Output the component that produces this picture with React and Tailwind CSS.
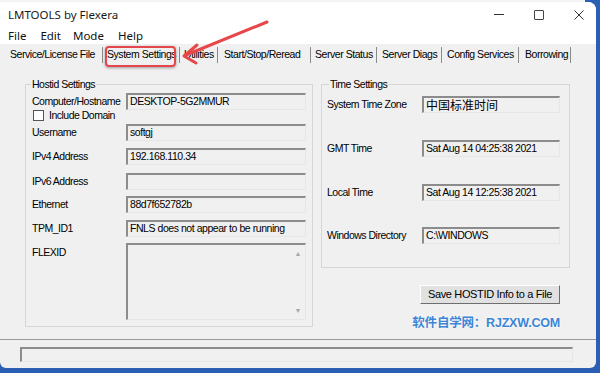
import React from 'react';

const ui = "font-['Liberation_Sans',Arial,sans-serif]";
const seg = "font-['Noto_Sans','Liberation_Sans',sans-serif]";

const tabs = [
  { label: 'Service/License File', w: 'w-[103px]', pl: 'pl-[10px]' },
  { label: 'System Settings', w: 'w-[77px]', pl: 'pl-[4px]' },
  { label: 'Utilities', w: 'w-[38px]', pl: 'pl-[4px]' },
  { label: 'Start/Stop/Reread', w: 'w-[93px]', pl: 'pl-[6px]' },
  { label: 'Server Status', w: 'w-[66px]', pl: 'pl-[4px]' },
  { label: 'Server Diags', w: 'w-[65px]', pl: 'pl-[5px]' },
  { label: 'Config Services', w: 'w-[77px]', pl: 'pl-[5px]' },
  { label: 'Borrowing', w: 'w-[52px]', pl: 'pl-[6px]' },
];

function Box({ value, className = '' }) {
  return (
    <div
      className={`h-[17px] flex items-center pl-[2px] bg-[#f0f0f0] border-t-2 border-l-2 border-t-[#8c8c8c] border-l-[#8c8c8c] border-b border-r border-b-[#e6e6e6] border-r-[#e6e6e6] text-[10.5px] tracking-[-0.45px] text-black whitespace-nowrap overflow-hidden ${className}`}
    >
      {value}
    </div>
  );
}

function Row({ label, value, labelW, boxW, className = '' }) {
  return (
    <div className={`flex items-center ${className}`}>
      <div className={`${labelW} text-[10.5px] tracking-[-0.5px] text-black whitespace-nowrap`}>{label}</div>
      <Box value={value} className={boxW} />
    </div>
  );
}

export default function App() {
  return (
    <div className={`w-[600px] h-[373px] overflow-hidden bg-[#2b5fb3] relative ${ui}`}>
      <div className="h-[2px] w-[585px] bg-[#f4f4f4]"></div>

      <div className="w-[596px] h-[366px] bg-[#f0f0f0] rounded-tr-[8px] rounded-br-[6px] rounded-bl-[6px] overflow-hidden flex flex-col">
        {/* title bar */}
        <div className={`h-[25px] bg-white flex items-center justify-between pl-[8px] pr-[12px] ${seg}`}>
          <span className="text-[11.5px] text-[#1a1a1a]">LMTOOLS by Flexera</span>
          <div className="flex items-center gap-[30px]">
            <div className="w-[10px] h-[1px] bg-[#333]"></div>
            <div className="w-[10px] h-[10px] border border-[#444] rounded-[1px]"></div>
            <svg width="10" height="10" viewBox="0 0 10 10">
              <path d="M0.5 0.5 L9.5 9.5 M9.5 0.5 L0.5 9.5" stroke="#333" strokeWidth="1" />
            </svg>
          </div>
        </div>

        {/* menu bar */}
        <div className={`h-[17px] bg-white flex items-center text-[11.5px] text-[#111] ${seg}`}>
          <span className="ml-[8px]">File</span>
          <span className="ml-[14px]">Edit</span>
          <span className="ml-[12px]">Mode</span>
          <span className="ml-[14px]">Help</span>
        </div>

        {/* tabs */}
        <div className="h-[20px] flex items-center pt-[2px]">
          {tabs.map((t) => (
            <div
              key={t.label}
              className={`${t.w} ${t.pl} h-[16px] flex items-center border-r border-[#8a8a8a] text-[10.5px] tracking-[-0.45px] text-black whitespace-nowrap`}
            >
              {t.label}
            </div>
          ))}
        </div>

        {/* tab page */}
        <div className="h-[275px] flex pt-[20px] pl-[25px] gap-[8px]">
          {/* Hostid Settings */}
          <div className="w-[288px] h-[243px] border border-[#d6d6d6] relative pl-[6px] pt-[8px]">
            <span className="absolute -top-[8px] left-[5px] px-[1px] bg-[#f0f0f0] text-[10.5px] tracking-[-0.5px] text-black leading-[14px]">
              Hostid Settings
            </span>
            <Row label="Computer/Hostname" value="DESKTOP-5G2MMUR" labelW="w-[94px]" boxW="w-[180px]" />
            <div className="flex items-center h-[11px]">
              <div className="ml-[1px] w-[11px] h-[11px] bg-white border border-[#555]"></div>
              <span className="ml-[5px] text-[10.5px] tracking-[-0.5px] text-black">Include Domain</span>
            </div>
            <Row label="Username" value="softgj" labelW="w-[94px]" boxW="w-[180px]" className="mt-[3px]" />
            <Row label="IPv4 Address" value="192.168.110.34" labelW="w-[94px]" boxW="w-[180px]" className="mt-[7px]" />
            <Row label="IPv6 Address" value="" labelW="w-[94px]" boxW="w-[180px]" className="mt-[8px]" />
            <Row label="Ethernet" value="88d7f652782b" labelW="w-[94px]" boxW="w-[180px]" className="mt-[6px]" />
            <Row label="TPM_ID1" value="FNLS does not appear to be running" labelW="w-[94px]" boxW="w-[180px]" className="mt-[7px]" />
            <div className="flex mt-[6px]">
              <div className="w-[94px] text-[10.5px] tracking-[-0.5px] text-black pt-[2px]">FLEXID</div>
              <div className="w-[180px] h-[77px] bg-[#f0f0f0] border-t-2 border-l-2 border-t-[#8c8c8c] border-l-[#8c8c8c] border-b border-r border-b-[#e6e6e6] border-r-[#e6e6e6] flex justify-end">
                <div className="w-[14px] h-full flex flex-col items-center justify-between py-[5px] text-[7px] text-[#a8a8a8] leading-none">
                  <span>▲</span>
                  <span>▼</span>
                </div>
              </div>
            </div>
          </div>

          {/* right column */}
          <div className="w-[249px] flex flex-col">
            <div className="h-[184px] border border-[#d6d6d6] relative pl-[5px] pt-[11px]">
              <span className="absolute -top-[8px] left-[7px] px-[1px] bg-[#f0f0f0] text-[10.5px] tracking-[-0.5px] text-black leading-[14px]">
                Time Settings
              </span>
              <Row
                label="System Time Zone"
                value={<span className="font-['Noto_Sans_CJK_SC',sans-serif] text-[12px] tracking-normal">中国标准时间</span>}
                labelW="w-[95px]"
                boxW="w-[138px]"
              />
              <Row label="GMT Time" value="Sat Aug 14 04:25:38 2021" labelW="w-[95px]" boxW="w-[138px]" className="mt-[27px]" />
              <Row label="Local Time" value="Sat Aug 14 12:25:38 2021" labelW="w-[95px]" boxW="w-[138px]" className="mt-[27px]" />
              <Row label="Windows Directory" value="C:\WINDOWS" labelW="w-[95px]" boxW="w-[138px]" className="mt-[26px]" />
            </div>
            <button className="mt-[17px] ml-[99px] w-[140px] h-[19px] bg-[#e1e1e1] border border-t-white border-l-white border-b-[#6e6e6e] border-r-[#6e6e6e] text-[11px] tracking-[-0.35px] text-black whitespace-nowrap flex items-center justify-center">
              Save HOSTID Info to a File
            </button>
            <div className="mt-[10px] pr-[10px] text-right text-[12.5px] font-bold text-[#3d86d6] tracking-[-0.2px] font-['Liberation_Sans','Noto_Sans_CJK_SC',sans-serif] [text-shadow:0_0_3px_#ffffff]">
              软件自学网：RJZXW.COM
            </div>
          </div>
        </div>

        {/* status */}
        <div className="border-t border-t-[#9a9a9a] flex-1 pt-[7px] pl-[20px]">
          <div className="w-[553px] h-[15px] bg-[#f0f0f0] border-t-2 border-l-2 border-t-[#8c8c8c] border-l-[#8c8c8c] border-b border-r border-b-[#e6e6e6] border-r-[#e6e6e6]"></div>
        </div>
      </div>

      {/* annotation: red highlight and arrow */}
      <div className="absolute left-[105px] top-[46px] w-[71px] h-[21px] border-2 border-[#e3464b] rounded-[4px] shadow-[0_1px_3px_rgba(0,0,0,0.35)]"></div>
      <svg className="absolute left-0 top-0 pointer-events-none" width="600" height="373" viewBox="0 0 600 373">
        <line x1="267" y1="22" x2="186" y2="55" stroke="#e8474a" strokeWidth="3" strokeLinecap="round" />
        <polyline points="197,45 184,56 196,63" fill="none" stroke="#e8474a" strokeWidth="3" strokeLinecap="round" strokeLinejoin="round" />
      </svg>
    </div>
  );
}
